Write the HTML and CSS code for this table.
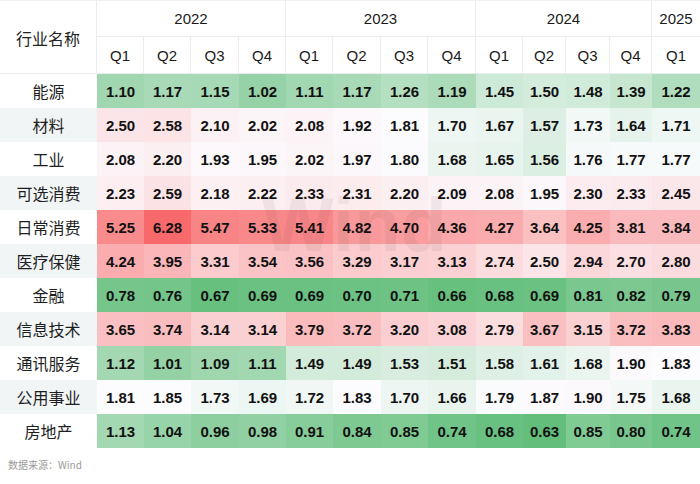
FILE: index.html
```html
<!DOCTYPE html>
<html lang="zh-CN">
<head>
<meta charset="utf-8">
<title>行业估值热力图</title>
<link rel="stylesheet" href="styles.css">
</head>
<body>
<div class="page">
  <table class="heat">
    <colgroup>
      <col class="w97">
      <col class="w47"><col class="w47"><col class="w48"><col class="w47">
      <col class="w47"><col class="w48"><col class="w47"><col class="w48">
      <col class="w47"><col class="w43"><col class="w44"><col class="w42">
      <col class="w48">
    </colgroup>
    <thead>
      <tr class="r-year">
        <th rowspan="2" class="name-h">行业名称</th>
        <th colspan="4">2022</th>
        <th colspan="4">2023</th>
        <th colspan="4">2024</th>
        <th>2025</th>
      </tr>
      <tr class="r-q">
        <th>Q1</th><th>Q2</th><th>Q3</th><th>Q4</th>
        <th>Q1</th><th>Q2</th><th>Q3</th><th>Q4</th>
        <th>Q1</th><th>Q2</th><th>Q3</th><th>Q4</th>
        <th>Q1</th>
      </tr>
    </thead>
    <tbody>
      <tr><th class="name">能源</th><td>1.10</td><td>1.17</td><td>1.15</td><td>1.02</td><td>1.11</td><td>1.17</td><td>1.26</td><td>1.19</td><td>1.45</td><td>1.50</td><td>1.48</td><td>1.39</td><td>1.22</td></tr>
      <tr class="alt"><th class="name">材料</th><td>2.50</td><td>2.58</td><td>2.10</td><td>2.02</td><td>2.08</td><td>1.92</td><td>1.81</td><td>1.70</td><td>1.67</td><td>1.57</td><td>1.73</td><td>1.64</td><td>1.71</td></tr>
      <tr><th class="name">工业</th><td>2.08</td><td>2.20</td><td>1.93</td><td>1.95</td><td>2.02</td><td>1.97</td><td>1.80</td><td>1.68</td><td>1.65</td><td>1.56</td><td>1.76</td><td>1.77</td><td>1.77</td></tr>
      <tr class="alt"><th class="name">可选消费</th><td>2.23</td><td>2.59</td><td>2.18</td><td>2.22</td><td>2.33</td><td>2.31</td><td>2.20</td><td>2.09</td><td>2.08</td><td>1.95</td><td>2.30</td><td>2.33</td><td>2.45</td></tr>
      <tr><th class="name">日常消费</th><td>5.25</td><td>6.28</td><td>5.47</td><td>5.33</td><td>5.41</td><td>4.82</td><td>4.70</td><td>4.36</td><td>4.27</td><td>3.64</td><td>4.25</td><td>3.81</td><td>3.84</td></tr>
      <tr class="alt"><th class="name">医疗保健</th><td>4.24</td><td>3.95</td><td>3.31</td><td>3.54</td><td>3.56</td><td>3.29</td><td>3.17</td><td>3.13</td><td>2.74</td><td>2.50</td><td>2.94</td><td>2.70</td><td>2.80</td></tr>
      <tr><th class="name">金融</th><td>0.78</td><td>0.76</td><td>0.67</td><td>0.69</td><td>0.69</td><td>0.70</td><td>0.71</td><td>0.66</td><td>0.68</td><td>0.69</td><td>0.81</td><td>0.82</td><td>0.79</td></tr>
      <tr class="alt"><th class="name">信息技术</th><td>3.65</td><td>3.74</td><td>3.14</td><td>3.14</td><td>3.79</td><td>3.72</td><td>3.20</td><td>3.08</td><td>2.79</td><td>3.67</td><td>3.15</td><td>3.72</td><td>3.83</td></tr>
      <tr><th class="name">通讯服务</th><td>1.12</td><td>1.01</td><td>1.09</td><td>1.11</td><td>1.49</td><td>1.49</td><td>1.53</td><td>1.51</td><td>1.58</td><td>1.61</td><td>1.68</td><td>1.90</td><td>1.83</td></tr>
      <tr class="alt"><th class="name">公用事业</th><td>1.81</td><td>1.85</td><td>1.73</td><td>1.69</td><td>1.72</td><td>1.83</td><td>1.70</td><td>1.66</td><td>1.79</td><td>1.87</td><td>1.90</td><td>1.75</td><td>1.68</td></tr>
      <tr><th class="name">房地产</th><td>1.13</td><td>1.04</td><td>0.96</td><td>0.98</td><td>0.91</td><td>0.84</td><td>0.85</td><td>0.74</td><td>0.68</td><td>0.63</td><td>0.85</td><td>0.80</td><td>0.74</td></tr>
    </tbody>
  </table>
  <p class="source">数据来源：Wind</p>
</div>
<script src="script.js"></script>
</body>
</html>
```

FILE: styles.css
```css
* { box-sizing: border-box; }
html, body { margin: 0; padding: 0; background: #fff; }
body { font-family: "Liberation Sans", Arial, "Noto Sans CJK SC", sans-serif; color: #111; }

.page { position: relative; width: 700px; }

/* decorative watermark drawn over the table */
.page::after {
  content: "Wind";
  position: absolute;
  left: 262px;
  top: 182px;
  font-family: "Liberation Sans", Arial, sans-serif;
  font-weight: bold;
  font-size: 76px;
  line-height: 86px;
  color: rgba(50, 40, 40, 0.06);
  pointer-events: none;
}

.heat {
  width: 700px;
  table-layout: fixed;
  border-collapse: separate;
  border-spacing: 0;
}
.w97 { width: 97px; }
.w47 { width: 47px; }
.w48 { width: 48px; }
.w43 { width: 43px; }
.w44 { width: 44px; }
.w42 { width: 42px; }

.heat th, .heat td { padding: 0; text-align: center; vertical-align: middle; }

.heat thead th {
  font-weight: normal;
  font-size: 15px;
  color: #1a1a1a;
  border-right: 1px solid #ececec;
  border-bottom: 1px solid #ececec;
  background: #fff;
}
.heat thead th:last-child { border-right: none; }
.r-year th { height: 37px; border-top: 1px solid #f0f0f0; }
.r-q th { height: 37px; }
.heat thead .name-h {
  font-family: "Noto Sans CJK SC", sans-serif;
  font-size: 16px;
  color: #222;
  padding-top: 2px;
}

.heat tbody tr { height: 34px; }
.heat tbody .name {
  font-family: "Noto Sans CJK SC", sans-serif;
  font-weight: normal;
  font-size: 16px;
  color: #1e1e1e;
  background: #fff;
}
.heat tbody tr.alt .name { background: #f2f5f6; }
.heat tbody td {
  font-weight: bold;
  font-size: 15px;
  color: #111;
  background: #fcfcff;
}

.source {
  margin: 11px 0 0 8px;
  font-family: "Noto Sans CJK SC", sans-serif;
  font-size: 10px;
  line-height: 12px;
  color: #9a9a9a;
}
```

FILE: script.js
```js
(function () {
  var cells = Array.prototype.slice.call(document.querySelectorAll('.heat tbody td'));
  var vals = cells.map(function (c) { return parseFloat(c.textContent); });
  var sorted = vals.slice().sort(function (a, b) { return a - b; });
  var n = sorted.length;
  var pos = (n - 1) * 0.5;
  var lo = Math.floor(pos), hi = Math.ceil(pos);
  var mid = sorted[lo] + (sorted[hi] - sorted[lo]) * (pos - lo);
  var min = sorted[0], max = sorted[n - 1];
  var G = [99, 190, 123], W = [252, 252, 255], R = [248, 105, 107];
  function mix(a, b, t) {
    return 'rgb(' + [0, 1, 2].map(function (i) { return Math.round(a[i] + (b[i] - a[i]) * t); }).join(',') + ')';
  }
  cells.forEach(function (c, i) {
    var v = vals[i], col;
    if (v <= mid) col = mix(W, G, (mid - v) / (mid - min));
    else col = mix(W, R, (v - mid) / (max - mid));
    c.style.background = col;
  });
})();
```
